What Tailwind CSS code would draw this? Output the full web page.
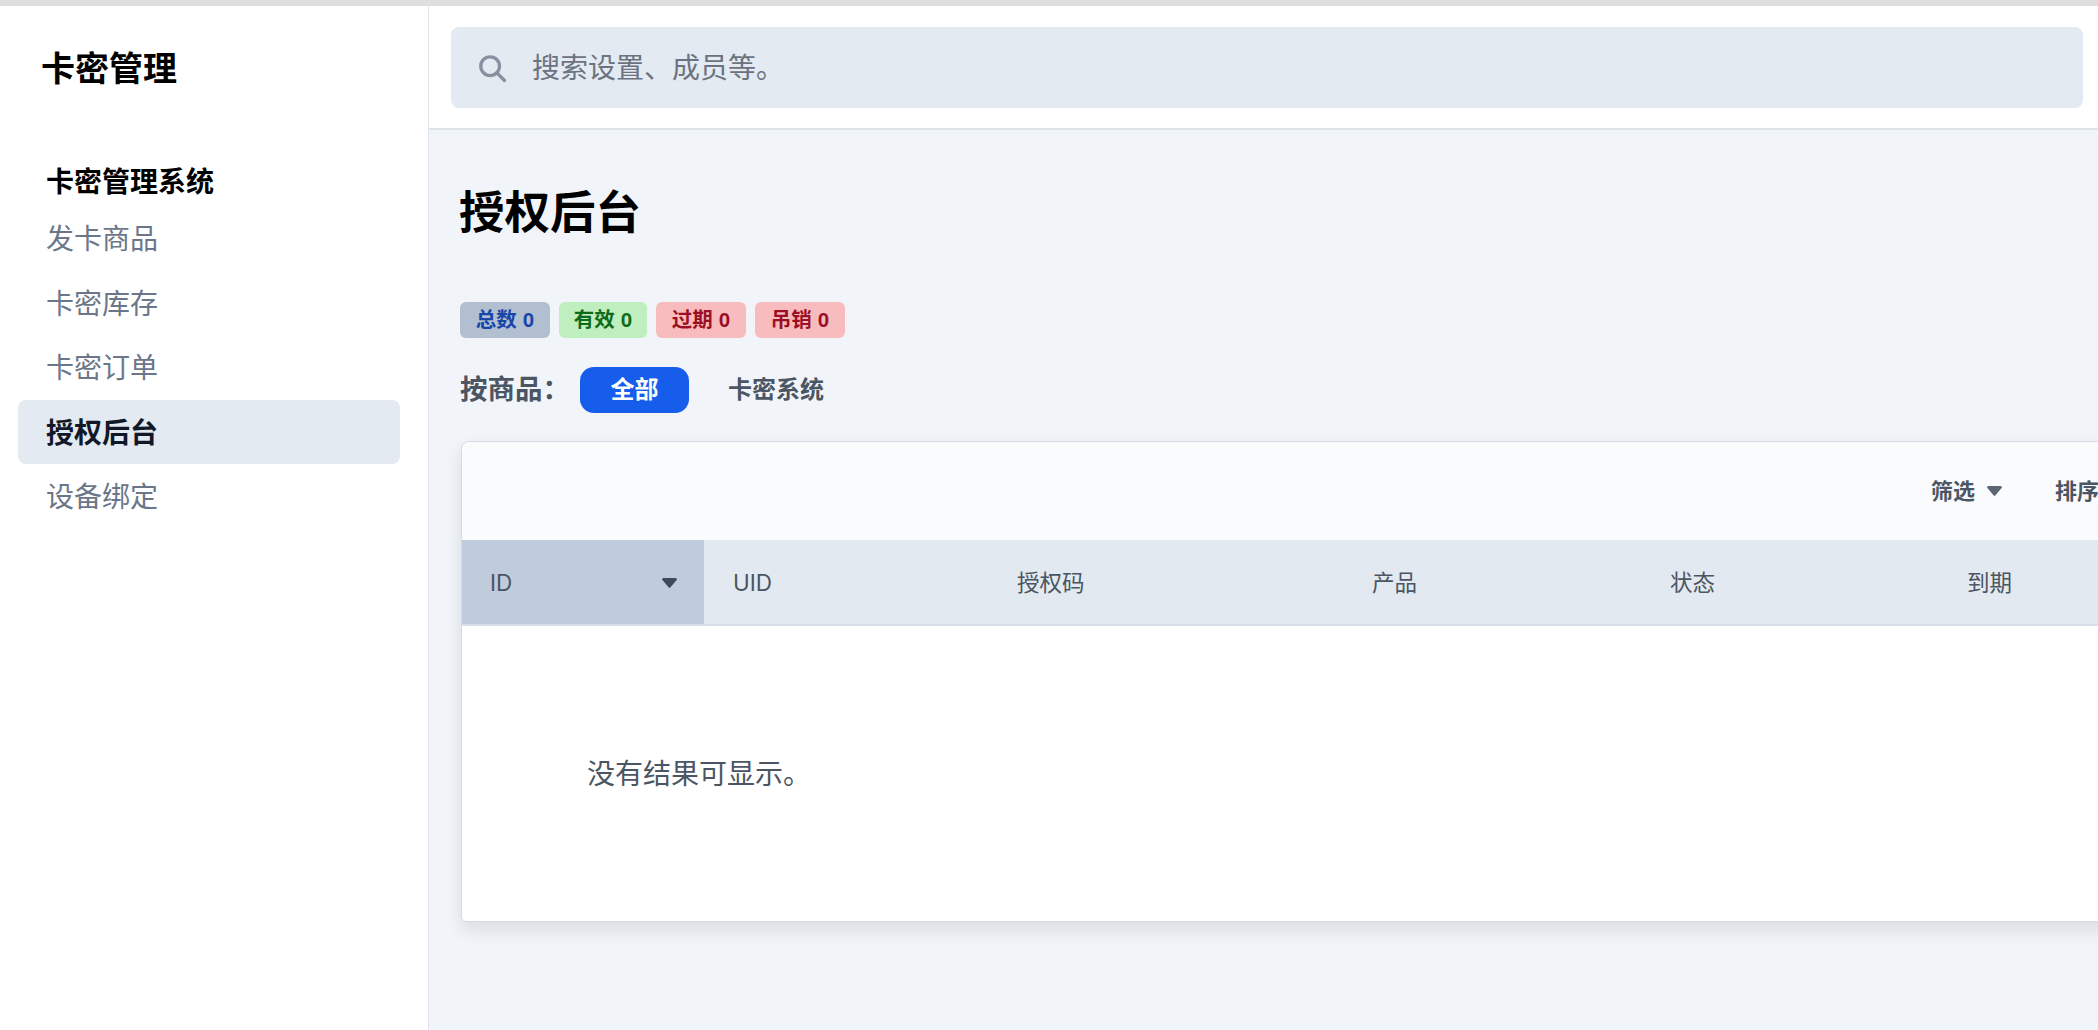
<!DOCTYPE html>
<html lang="zh-CN">
<head>
<meta charset="utf-8">
<title>授权后台</title>
<script src="https://cdn.jsdelivr.net/npm/@tailwindcss/browser@4"></script>
</head>
<body class="h-[1030px] w-[2098px] overflow-hidden bg-white font-['Inter','Noto_Sans_CJK_SC',sans-serif]">
<div class="h-[6px] bg-[#dedede]"></div>
<div class="flex h-[1024px]">
  <aside class="w-[429px] shrink-0 border-r border-[#dfe3ea] bg-white">
    <div class="pl-[41px] pt-[42px] text-[34px] leading-[42px] font-bold text-black">卡密管理</div>
    <nav class="mt-[72px]">
      <div class="mb-[4px] h-[40px] pl-[46px] text-[28px] leading-[40px] font-bold text-black">卡密管理系统</div>
      <a class="ml-[18px] mr-[28px] flex h-[64.5px] items-center pl-[28px] pt-[2px] text-[28px] text-[#6b7689]">发卡商品</a>
      <a class="ml-[18px] mr-[28px] flex h-[64.5px] items-center pl-[28px] pt-[2px] text-[28px] text-[#6b7689]">卡密库存</a>
      <a class="ml-[18px] mr-[28px] flex h-[64.5px] items-center pl-[28px] pt-[2px] text-[28px] text-[#6b7689]">卡密订单</a>
      <a class="ml-[18px] mr-[28px] flex h-[64.5px] items-center rounded-lg bg-[#e4eaf1] pl-[28px] pt-[2px] text-[28px] font-bold text-[#111827]">授权后台</a>
      <a class="ml-[18px] mr-[28px] flex h-[64.5px] items-center pl-[28px] pt-[2px] text-[28px] text-[#6b7689]">设备绑定</a>
    </nav>
  </aside>
  <div class="flex min-w-0 flex-1 flex-col">
    <header class="h-[124px] shrink-0 border-b-2 border-[#dfe3ea] bg-white pl-[22px] pr-[15px] pt-[21px]">
      <div class="flex h-[81px] items-center rounded-lg bg-[#e4eaf1] pl-[26px]">
        <svg class="h-[30px] w-[30px] text-[#87919f]" viewBox="0 0 24 24" fill="none" stroke="currentColor" stroke-width="2.6" stroke-linecap="round"><circle cx="10.5" cy="10.5" r="7.5"/><path d="M16 16l6 6"/></svg>
        <span class="ml-[25px] text-[28px] text-[#6b7280]">搜索设置、成员等。</span>
      </div>
    </header>
    <main class="flex-1 overflow-hidden bg-[#f1f5f9] pl-[30px] pt-[53px]">
      <h1 class="text-[45.5px] leading-[60px] font-bold text-black">授权后台</h1>
      <div class="ml-px mt-[59px] flex gap-[9px] font-['Liberation_Sans','Noto_Sans_CJK_SC',sans-serif]">
        <span class="flex h-[36px] w-[90px] items-center justify-center gap-[6px] rounded-md bg-[#b2bfd1] text-[20.5px] font-bold text-[#1846a8]"><span>总数</span><span>0</span></span>
        <span class="flex h-[36px] w-[88px] items-center justify-center gap-[6px] rounded-md bg-[#bfeebf] text-[20.5px] font-bold text-[#0f6b1a]"><span>有效</span><span>0</span></span>
        <span class="flex h-[36px] w-[90px] items-center justify-center gap-[6px] rounded-md bg-[#f8bcbf] text-[20.5px] font-bold text-[#9b0f25]"><span>过期</span><span>0</span></span>
        <span class="flex h-[36px] w-[90px] items-center justify-center gap-[6px] rounded-md bg-[#f8bcbf] text-[20.5px] font-bold text-[#9b0f25]"><span>吊销</span><span>0</span></span>
      </div>
      <div class="ml-px mt-[29px] flex h-[46px] items-center">
        <span class="w-[120px] text-[27.5px] font-bold text-[#4b5563]">按商品：</span>
        <span class="flex h-[46px] w-[109px] items-center justify-center rounded-[14px] bg-[#155dea] text-[24px] font-bold text-white">全部</span>
        <span class="ml-[39px] text-[24px] font-bold text-[#4b5563]">卡密系统</span>
      </div>
      <section class="ml-[2px] mt-[28px] flex h-[481px] w-[1800px] flex-col overflow-hidden rounded-t-lg rounded-b-md border border-[#d5dae3] bg-white shadow-[0_8px_18px_rgba(15,23,42,0.10)]">
        <div class="flex h-[98px] shrink-0 items-center bg-[#f9fbfd] pl-[1469px] text-[22px] font-bold text-[#4b5563]">
          <span>筛选</span>
          <svg class="ml-[12px] h-[10px] w-[15px] text-[#5b6675]" viewBox="0 0 15 10" fill="currentColor"><path d="M0 1.5Q0 0 1.5 0h12Q15 0 15 1.5L8.5 9.2q-1 1.2-2 0z"/></svg>
          <span class="ml-[53px]">排序</span>
        </div>
        <div class="grid h-[86px] shrink-0 grid-cols-[242px_284px_355px_298px_297px_1fr] items-center border-b-2 border-[#d8dee8] bg-[#e3e9f0] text-[22.5px] text-[#4b5563]">
          <div class="flex h-full items-center justify-between bg-[#c0cbdc] pl-[28px] pr-[27px] pt-[2px]">
            <span>ID</span>
            <svg class="h-[10px] w-[15px] text-[#3f4a5c]" viewBox="0 0 15 10" fill="currentColor"><path d="M0 1.5Q0 0 1.5 0h12Q15 0 15 1.5L8.5 9.2q-1 1.2-2 0z"/></svg>
          </div>
          <div class="pl-[29px] pt-[2px]">UID</div>
          <div class="pl-[29px] pt-[2px]">授权码</div>
          <div class="pl-[29px] pt-[2px]">产品</div>
          <div class="pl-[29px] pt-[2px]">状态</div>
          <div class="pl-[29px] pt-[2px]">到期</div>
        </div>
        <div class="flex flex-1 items-center bg-white pl-[125px] text-[28px] text-[#4b5563]">没有结果可显示。</div>
      </section>
    </main>
  </div>
</div>
</body>
</html>
